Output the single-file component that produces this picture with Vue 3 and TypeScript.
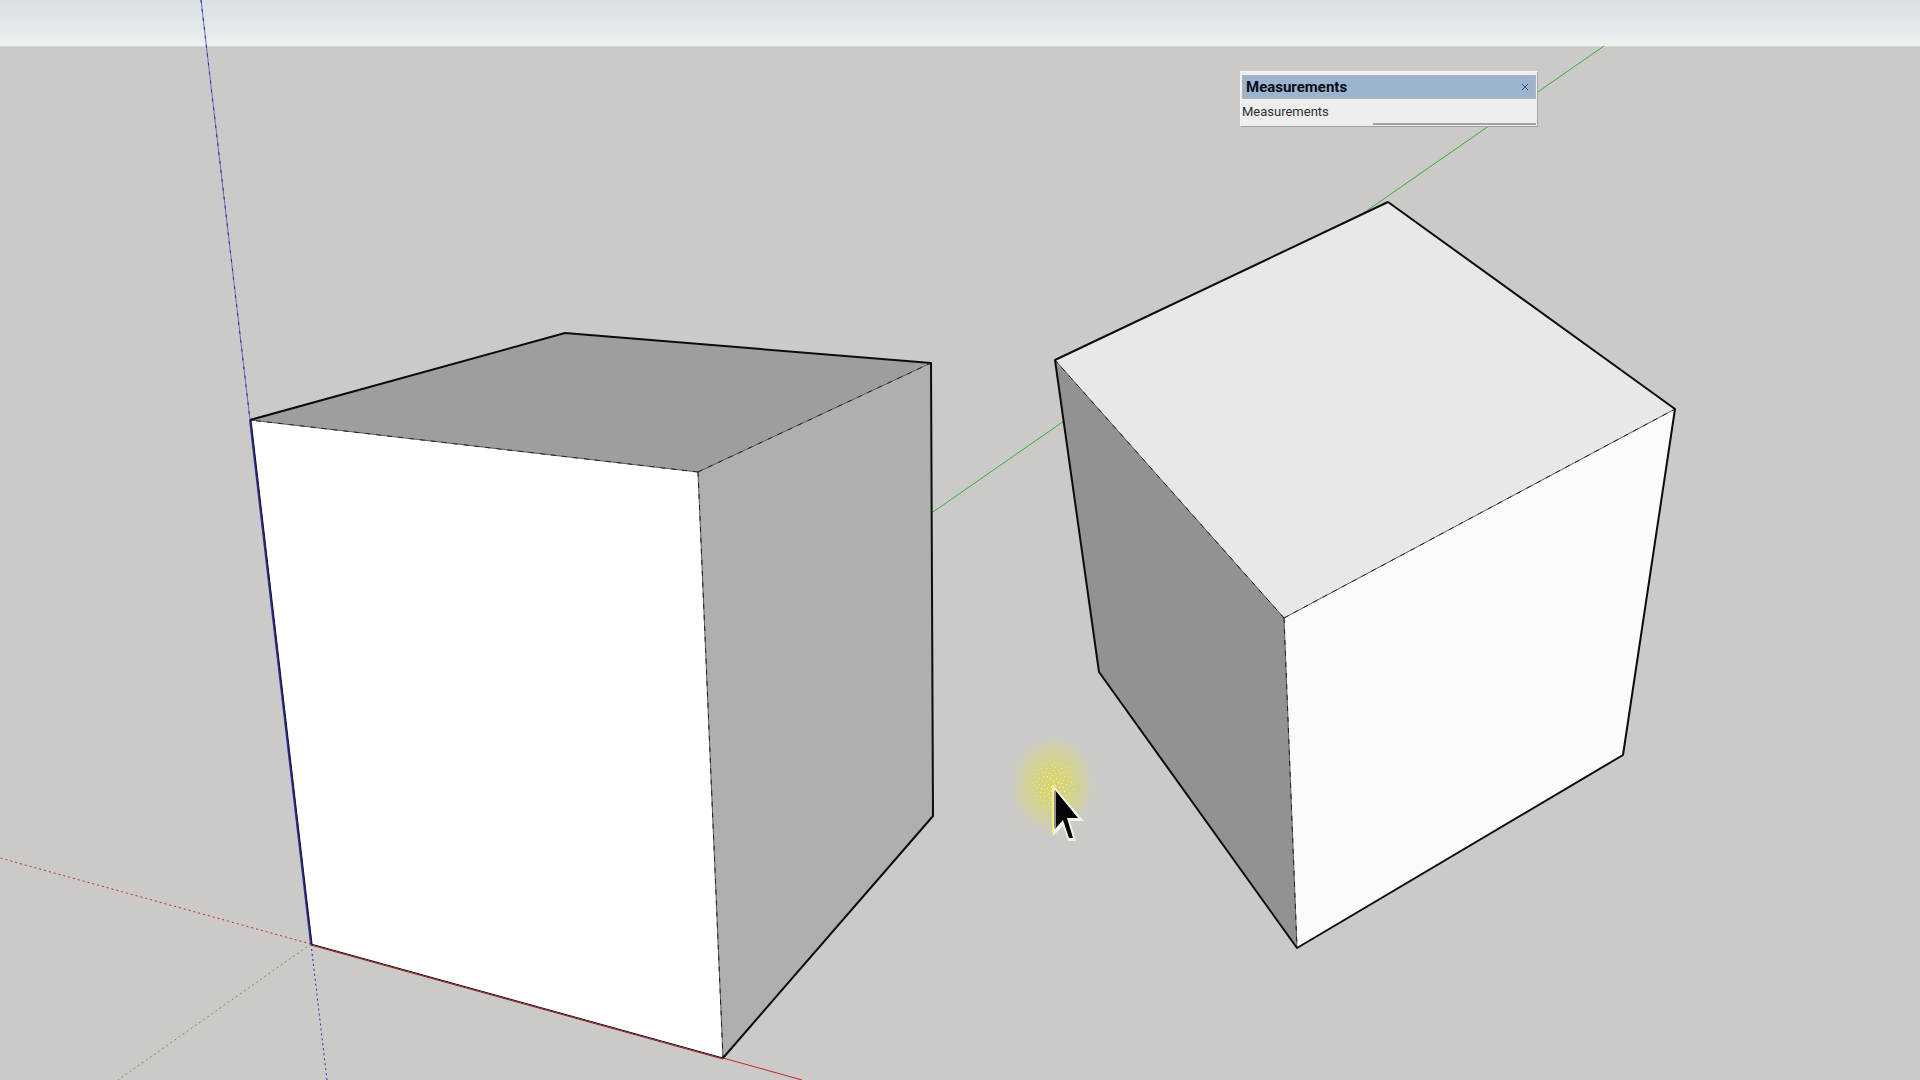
<script setup lang="ts">
import { ref } from 'vue'

interface Face { points: string; fill: string }
interface Edge { x1: number; y1: number; x2: number; y2: number }
interface Dot { x: number; y: number; o: number }

const faces: Face[] = [
  { points: '250,420 565,333 931,363 698,472', fill: '#9e9e9e' },
  { points: '250,420 698,472 723,1058 311,944', fill: '#ffffff' },
  { points: '698,472 931,363 933,816 723,1058', fill: '#afafaf' },
  { points: '1055,360 1388,202 1675,409 1284,618', fill: '#e8e8e8' },
  { points: '1055,360 1284,618 1297,948 1099,672', fill: '#929292' },
  { points: '1284,618 1675,409 1623,755 1297,948', fill: '#fbfbfb' },
]

const innerEdges: Edge[] = [
  { x1: 698, y1: 472, x2: 250, y2: 420 },
  { x1: 698, y1: 472, x2: 931, y2: 363 },
  { x1: 698, y1: 472, x2: 723, y2: 1058 },
  { x1: 1284, y1: 618, x2: 1055, y2: 360 },
  { x1: 1284, y1: 618, x2: 1675, y2: 409 },
  { x1: 1284, y1: 618, x2: 1297, y2: 948 },
]

// Speckles of the click highlight, spread on a sunflower spiral
const dots: Dot[] = Array.from({ length: 110 }, (_, i) => {
  const r = 2.2 * Math.sqrt(i + 1)
  const a = i * 2.39996
  return { x: Math.round(1053 + r * Math.cos(a)), y: Math.round(785 + r * 1.1 * Math.sin(a)), o: 1 - r / 34 }
})

const open = ref(true)
const value = ref('')
</script>

<template>
  <main class="viewport">
    <svg class="scene" viewBox="0 0 1920 1080" preserveAspectRatio="xMidYMid slice" aria-hidden="true">
      <defs>
        <linearGradient id="sky" x1="0" y1="0" x2="0" y2="1">
          <stop offset="0" stop-color="#d9dfe2" />
          <stop offset="0.5" stop-color="#e2e7ea" />
          <stop offset="1" stop-color="#eff1f2" />
        </linearGradient>
        <radialGradient id="glow">
          <stop offset="0" stop-color="#d8d570" />
          <stop offset="0.35" stop-color="#d6d47e" stop-opacity="0.95" />
          <stop offset="0.7" stop-color="#d4d292" stop-opacity="0.65" />
          <stop offset="1" stop-color="#cccbc0" stop-opacity="0" />
        </radialGradient>
      </defs>
      <rect width="1920" height="1080" fill="#cbcac8" />
      <rect width="1920" height="46" fill="url(#sky)" />
      <rect y="46" width="1920" height="1" fill="#d6d7d3" />

      <line class="axis blue" x1="201" y1="0" x2="250" y2="420" />
      <line class="axis blue dash" x1="201" y1="0" x2="250" y2="420" />
      <line class="axis green" x1="933" y1="512" x2="1604" y2="46" />
      <line class="axis red" x1="723" y1="1058" x2="802" y2="1080" />
      <line class="dotted red" x1="311" y1="944" x2="0" y2="858" />
      <line class="dotted green" x1="311" y1="944" x2="118" y2="1080" />
      <line class="dotted blue" x1="311" y1="944" x2="327" y2="1080" />

      <polygon v-for="f in faces" :key="f.points" :points="f.points" :fill="f.fill" />
      <g class="inner">
        <line v-for="(e, i) in innerEdges" :key="i" v-bind="e" />
        <line v-for="(e, i) in innerEdges" :key="'d' + i" class="dash" v-bind="e" />
      </g>
      <polyline class="outline" points="250,420 565,333 931,363 933,816 723,1058" />
      <polygon class="outline" points="1055,360 1388,202 1675,409 1623,755 1297,948 1099,672" />
      <line class="base-blue" x1="250" y1="420" x2="311" y2="944" />
      <line class="base-dark" x1="251" y1="420" x2="312" y2="944" />
      <line class="base-dark" x1="311" y1="944" x2="723" y2="1058" />
      <line class="base-red" x1="311" y1="945" x2="723" y2="1059" />

      <ellipse cx="1053" cy="785" rx="45" ry="53" fill="url(#glow)" />
      <rect v-for="(d, i) in dots" :key="i" :x="d.x" :y="d.y" width="1" height="1" fill="#ffff9c" :opacity="d.o" />
      <path d="M1053 785V836L1063 826L1068 841H1076L1070 821H1084Z" fill="#f1f1e8" />
      <path d="M1053 785V834" stroke="#f1f08a" stroke-width="2" />
      <path d="M1055 790V829L1063 820L1069 838H1073L1067 818H1078Z" fill="#050505" />
      <path d="M1055 791V828" stroke="#8f8f8b" stroke-width="2" />
    </svg>

    <section v-if="open" class="panel" aria-label="Measurements">
      <header class="title">
        <h1>Measurements</h1>
        <button type="button" aria-label="Close" @click="open = false">
          <svg viewBox="0 0 8 8"><path d="M1 1L7 7M7 1L1 7" /></svg>
        </button>
      </header>
      <div class="row">
        <label for="measure">Measurements</label>
        <input id="measure" v-model="value" type="text" autocomplete="off" />
      </div>
    </section>
  </main>
</template>

<style>
body {
  margin: 0;
}
</style>

<style scoped>
.viewport {
  position: relative;
  height: 100vh;
  overflow: hidden;
  background: #cbcac8;
  font-family: Roboto, "Liberation Sans", sans-serif;
}
.scene {
  display: block;
  width: 100%;
  height: 100%;
}
.green { stroke: #35b035; }
.red { stroke: #c42828; }
.blue { stroke: #2c2cb4; }
.axis { stroke-width: 1; }
.axis.blue { stroke: #6c6cc0; }
.axis.dash {
  stroke: #2a2aa8;
  stroke-dasharray: 3 6;
}
.dotted {
  stroke-width: 1;
  stroke-dasharray: 2 3;
}
.inner line {
  stroke: #5c5c5c;
  stroke-width: 1;
}
.inner .dash {
  stroke: #222;
  stroke-dasharray: 5 6;
}
.outline {
  fill: none;
  stroke: #0c0c0c;
  stroke-width: 2;
  stroke-linejoin: round;
}
.base-blue { stroke: #2c2c9c; stroke-width: 2; }
.base-dark { stroke: #101020; stroke-width: 1; }
.base-red { stroke: #961414; stroke-width: 1; }

.panel {
  position: absolute;
  top: 71px;
  left: 1240px;
  box-sizing: border-box;
  width: 298px;
  padding: 3px 1px 1px;
  border: 1px solid #f6f6f6;
  border-right-color: #a5a5a5;
  border-bottom-color: #a0a0a0;
  background: #eeeeee;
}
.title {
  display: flex;
  align-items: center;
  justify-content: space-between;
  box-sizing: border-box;
  height: 24px;
  padding: 0 6px 0 3px;
  border: 1px solid #b5b3b1;
  background: #9bb5d1;
}
.title h1 {
  margin: 0;
  color: #080b10;
  font-size: 15px;
  font-weight: 700;
  line-height: 22px;
}
.title button {
  display: flex;
  align-items: center;
  justify-content: center;
  width: 8px;
  height: 20px;
  padding: 0;
  border: 0;
  background: none;
}
.title svg {
  width: 8px;
  height: 8px;
  fill: none;
  stroke: #45506a;
  stroke-width: 1;
}
.row {
  display: flex;
  justify-content: space-between;
  height: 26px;
}
.row label {
  color: #303030;
  font-size: 13px;
  line-height: 26px;
}
.row input {
  box-sizing: border-box;
  width: 163px;
  height: 26px;
  padding: 0 4px;
  border: 0;
  border-bottom: 2px solid #a2a2a2;
  outline: 0;
  background: transparent;
  color: #303030;
  font: inherit;
  font-size: 13px;
}
</style>
